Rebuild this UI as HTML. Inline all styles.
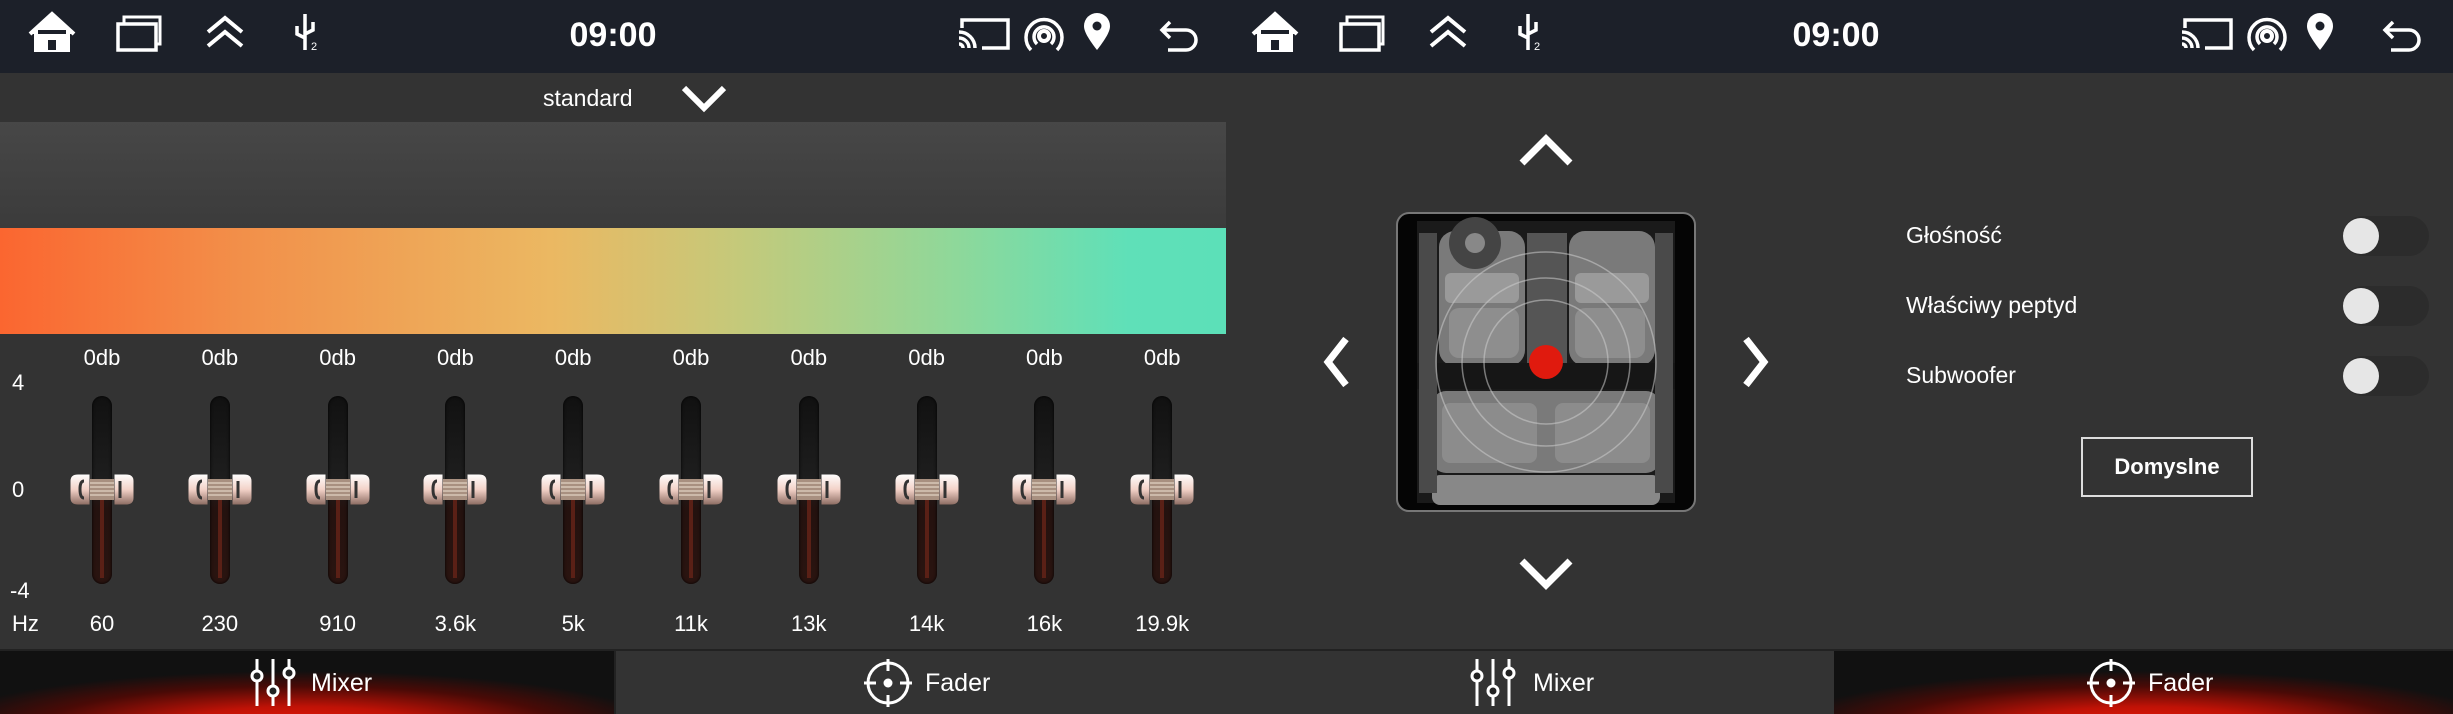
<!DOCTYPE html>
<html><head><meta charset="utf-8"><style>
*{margin:0;padding:0;box-sizing:border-box}
body{width:2453px;height:714px;background:#333;position:relative;overflow:hidden;font-family:"Liberation Sans",sans-serif;color:#fff}
.a{position:absolute}
.sb{top:0;height:73px;background:#1c2029}
.t{font-size:34px;font-weight:bold;text-align:center;width:200px;top:16px}
.lbl{font-size:22px;text-align:center;width:80px;margin-left:-40px}
.track{width:20px;height:188px;top:396px;margin-left:-10px;border-radius:10px;background:linear-gradient(#111,#1e1e1e 45%,#24120f 60%,#2a1410);box-shadow:inset 0 0 3px #000}
.track:after{content:"";position:absolute;left:8px;top:100px;width:4px;height:82px;background:#5a2016}
.knob{top:473px;width:68px;height:33px;margin-left:-34px}
.rl{font-size:23px;left:1906px}
.tg{left:2343px;width:86px;height:40px;border-radius:20px;background:#2c2c2c}
.tg:before{content:"";position:absolute;left:0;top:2px;width:36px;height:36px;border-radius:50%;background:#e6e6e6}
</style></head><body>
<div class="a sb" style="left:0;width:1226px"></div>
<div class="a sb" style="left:1226px;width:1227px"></div>
<svg class="a" style="left:0;top:0" width="2453" height="73" fill="none" stroke="#fff" stroke-width="4">
<g id="s">
<path d="M30 34 L52 14 L74 34 M36 30 V50 H68 V30" fill="#fff" stroke="#fff"/><rect x="48" y="40" width="8" height="10" fill="#1c2029" stroke="none"/>
<rect x="118" y="24" width="38" height="26" stroke-width="3.5"/><path d="M124 24 V17 H160 V44 H156" stroke-width="3"/>
<path d="M208 32 L225 18 L242 32 M208 46 L225 32 L242 46" stroke-width="4"/>
<path d="M305 14 V50 M297 26 V34 L305 38 M313 22 V30 L305 34" stroke-width="3.5"/><text x="311" y="50" font-size="11" fill="#fff" stroke="none" font-family="Liberation Sans">2</text>
<path d="M963 48 a4 4 0 0 0 -4 -4 M959 38 a10 10 0 0 1 10 10 M959 32 a16 16 0 0 1 16 16 M962 28 V20 H1008 V48 H982" stroke-width="3.5"/>
<circle cx="1044" cy="36" r="5"/><path d="M1031 50 a18 18 0 1 1 26 0 M1037 44 a10 10 0 1 1 14 0" stroke-width="3.5"/>
<path d="M1097 50 C1086 36 1084 30 1084 26 a13 13 0 0 1 26 0 C1110 30 1108 36 1097 50Z" fill="#fff" stroke="none"/><circle cx="1097" cy="26" r="4.5" fill="#1c2029" stroke="none"/>
<path d="M1170 22 L1162 30 L1170 38 M1162 30 H1186 a10 10 0 0 1 0 20 H1168" stroke-width="3.5"/>
</g>
<use href="#s" x="1223"/>
</svg>
<div class="a t" style="left:513px">09:00</div>
<div class="a t" style="left:1736px">09:00</div>

<div class="a" style="left:0;top:73px;width:1226px;height:49px;background:#333"></div>
<div class="a" style="left:543px;top:85px;font-size:23px">standard</div>
<svg class="a" style="left:680px;top:84px" width="48" height="30"><path d="M4 4 L24 24 L44 4" stroke="#fff" stroke-width="6" fill="none"/></svg>
<div class="a" style="left:0;top:122px;width:1226px;height:106px;background:linear-gradient(#474747,#3b3b3b)"></div>
<div class="a" style="left:0;top:228px;width:1226px;height:106px;background:linear-gradient(90deg,#fb6630 0%,#f2904a 20%,#ebb862 45%,#c5c97a 60%,#8ed89a 78%,#5fe0b8 92%,#5ce0b8 100%)"></div>
<div class="a" style="left:0;top:334px;width:1226px;height:317px;background:#333"></div>
<div class="a" style="left:12px;top:370px;font-size:22px">4</div>
<div class="a" style="left:12px;top:477px;font-size:22px">0</div>
<div class="a" style="left:10px;top:578px;font-size:22px">-4</div>
<div class="a" style="left:12px;top:611px;font-size:22px">Hz</div>
<svg width="0" height="0" class="a"><defs>
<linearGradient id="kg" x1="0" y1="0" x2="0" y2="1"><stop offset="0" stop-color="#fff"/><stop offset=".5" stop-color="#f3d2c8"/><stop offset="1" stop-color="#8a6a60"/></linearGradient>
<g id="kn"><path d="M2 8 Q2 1 10 1 H22 V32 H10 Q2 32 2 25Z" fill="url(#kg)" stroke="#333"/><path d="M46 1 H58 Q66 1 66 8 V25 Q66 32 58 32 H46Z" fill="url(#kg)" stroke="#333"/><rect x="22" y="6" width="24" height="21" fill="#a89080"/><path d="M22 10H46M22 14H46M22 18H46M22 22H46" stroke="#d8c8b8" stroke-width="1.5"/><path d="M16 8 Q12 8 12 16 Q12 25 16 25" fill="none" stroke="#333" stroke-width="3"/><path d="M52 8 V25" stroke="#333" stroke-width="3"/></g>
</defs></svg>
<div id="eq"></div>
<script>
var f=["60","230","910","3.6k","5k","11k","13k","14k","16k","19.9k"],h="";
for(var i=0;i<10;i++){var x=102+i*117.8;
h+='<div class="a lbl" style="left:'+x+'px;top:345px">0db</div>';
h+='<div class="a track" style="left:'+x+'px"></div>';
h+='<svg class="a knob" style="left:'+x+'px" width="68" height="33"><use href="#kn"/></svg>';
h+='<div class="a lbl" style="left:'+x+'px;top:611px">'+f[i]+'</div>';}
document.getElementById("eq").innerHTML=h;
</script>

<div class="a" style="left:0;top:651px;width:614px;height:63px;background:radial-gradient(ellipse 360px 55px at 300px 75px,#e81a08 0%,#c01206 35%,#4a0a06 72%,#111 100%)"></div>
<div class="a" style="left:614px;top:651px;width:612px;height:63px;background:#333;border-left:2px solid #222"></div>
<div class="a" style="left:1226px;top:651px;width:608px;height:63px;background:#333"></div>
<div class="a" style="left:1834px;top:651px;width:619px;height:63px;background:radial-gradient(ellipse 360px 55px at 310px 75px,#e81a08 0%,#c01206 35%,#4a0a06 72%,#111 100%)"></div>
<div class="a" style="left:0;top:649px;width:2453px;height:2px;background:#222"></div>
<svg class="a" style="left:0;top:651px" width="2453" height="63" fill="none" stroke="#fff" stroke-width="3">
<g id="mx"><path d="M257 8V55M273 8V55M289 8V55"/><circle cx="257" cy="25" r="5" fill="#222"/><circle cx="273" cy="40" r="5" fill="#222"/><circle cx="289" cy="22" r="5" fill="#222"/></g>
<g id="fd"><circle cx="888" cy="32" r="20"/><path d="M888 8V20M888 44V56M864 32H876M900 32H912"/><circle cx="888" cy="32" r="3" fill="#fff"/></g>
<use href="#mx" x="1220"/><use href="#fd" x="1223"/>
</svg>
<div class="a" style="left:311px;top:669px;font-size:25px">Mixer</div>
<div class="a" style="left:925px;top:669px;font-size:25px">Fader</div>
<div class="a" style="left:1533px;top:669px;font-size:25px">Mixer</div>
<div class="a" style="left:2148px;top:669px;font-size:25px">Fader</div>

<svg class="a" style="left:1226px;top:73px" width="620" height="578" fill="none" stroke="#fff" stroke-width="7">
<path d="M296 90 L320 66 L344 90"/><path d="M296 488 L320 512 L344 488"/>
<path d="M120 266 L102 289 L120 312"/><path d="M520 266 L538 289 L520 312"/>
<g transform="translate(171 140)" stroke="none">
<rect x="0" y="0" width="298" height="298" rx="12" fill="#050505" stroke="#777" stroke-width="2"/>
<rect x="20" y="8" width="258" height="282" fill="#1a1a1a"/>
<rect x="42" y="18" width="86" height="135" rx="16" fill="#7a7a7a"/>
<rect x="172" y="18" width="86" height="135" rx="16" fill="#7a7a7a"/>
<rect x="48" y="60" width="74" height="30" rx="6" fill="#9a9a9a"/><rect x="178" y="60" width="74" height="30" rx="6" fill="#9a9a9a"/>
<rect x="52" y="95" width="70" height="50" rx="10" fill="#8e8e8e"/><rect x="178" y="95" width="70" height="50" rx="10" fill="#8e8e8e"/>
<rect x="130" y="20" width="40" height="130" fill="#555"/>
<circle cx="78" cy="30" r="26" fill="#444"/><circle cx="78" cy="30" r="10" fill="#888"/>
<rect x="20" y="150" width="258" height="26" fill="#161616"/>
<rect x="35" y="178" width="228" height="82" rx="14" fill="#7a7a7a"/>
<rect x="45" y="190" width="95" height="60" rx="8" fill="#8c8c8c"/><rect x="158" y="190" width="95" height="60" rx="8" fill="#8c8c8c"/>
<rect x="35" y="262" width="228" height="30" rx="8" fill="#888"/>
<rect x="22" y="20" width="18" height="260" fill="#4a4a4a"/><rect x="258" y="20" width="18" height="260" fill="#4a4a4a"/>
<g fill="none" stroke="#ccc" stroke-width="1.5" opacity=".55"><circle cx="149" cy="149" r="110"/><circle cx="149" cy="149" r="84"/><circle cx="149" cy="149" r="62"/></g>
<circle cx="149" cy="149" r="17" fill="#e01a0e"/>
</g>
</svg>
<div class="a rl" style="top:222px">Głośność</div>
<div class="a rl" style="top:292px">Właściwy peptyd</div>
<div class="a rl" style="top:362px">Subwoofer</div>
<div class="a tg" style="top:216px"></div>
<div class="a tg" style="top:286px"></div>
<div class="a tg" style="top:356px"></div>
<div class="a" style="left:2081px;top:437px;width:172px;height:60px;border:2px solid #ddd;font-size:22px;font-weight:bold;text-align:center;line-height:56px">Domyslne</div>
</body></html>
